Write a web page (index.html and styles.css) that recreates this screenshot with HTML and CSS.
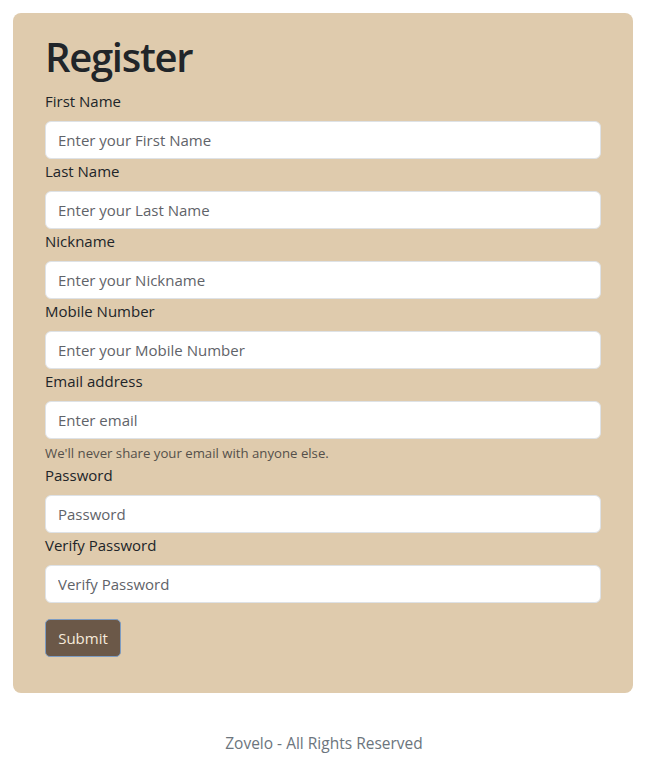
FILE: index.html
```html
<!DOCTYPE html>
<html lang="en">
<head>
<meta charset="utf-8">
<title>Register</title>
<link rel="stylesheet" href="styles.css">
</head>
<body>
<main class="card">
  <h1 class="title">Register</h1>
  <form class="form">
    <label class="label" for="fn">First Name</label>
    <input class="input" id="fn" type="text" placeholder="Enter your First Name">
    <label class="label" for="ln">Last Name</label>
    <input class="input" id="ln" type="text" placeholder="Enter your Last Name">
    <label class="label" for="nn">Nickname</label>
    <input class="input" id="nn" type="text" placeholder="Enter your Nickname">
    <label class="label" for="mn">Mobile Number</label>
    <input class="input" id="mn" type="text" placeholder="Enter your Mobile Number">
    <label class="label" for="em">Email address</label>
    <input class="input" id="em" type="email" placeholder="Enter email">
    <div class="help">We'll never share your email with anyone else.</div>
    <label class="label" for="pw">Password</label>
    <input class="input" id="pw" type="password" placeholder="Password">
    <label class="label" for="vp">Verify Password</label>
    <input class="input" id="vp" type="password" placeholder="Verify Password">
    <button class="btn" type="button">Submit</button>
  </form>
</main>
<footer class="footer">Zovelo - All Rights Reserved</footer>
</body>
</html>
```
FILE: styles.css
```css
* { box-sizing: border-box; }
body {
  margin: 0;
  font-family: "Open Sans", "Noto Sans", sans-serif;
  font-size: 16px;
  line-height: 1.5;
  color: #212529;
  background: #fff;
}
.card {
  margin: 13px 15px 0 13px;
  padding: 20px 32px 36px 32px;
  background: #dfcbad;
  border-radius: 8px;
}
.title {
  margin: 0 0 8px 0;
  font-size: 40px;
  line-height: 48px;
  font-weight: 600;
  letter-spacing: -1.3px;
}
.form {
  display: flex;
  flex-direction: column;
  align-items: stretch;
}
.label {
  display: block;
  line-height: 24px;
  margin-bottom: 8px;
  font-size: 15px;
}
.input {
  display: block;
  width: 100%;
  height: 38px;
  padding: 6px 12px;
  font-family: inherit;
  font-size: 15px;
  color: #212529;
  background: #fff;
  border: 1px solid #dee2e6;
  border-radius: 6px;
}
.input::placeholder { color: #5f6369; }
.help {
  margin-top: 4px;
  font-size: 13.2px;
  line-height: 20px;
  color: #55504a;
}
.btn {
  align-self: flex-start;
  margin-top: 16px;
  height: 38px;
  width: 76px;
  padding: 0;
  font-family: inherit;
  font-size: 15px;
  color: #f6eadb;
  background: #6b5848;
  border: 1px solid #7d9cc2;
  border-radius: 5px;
}
.footer {
  margin-top: 38px;
  text-align: center;
  line-height: 24px;
  font-size: 15.5px;
  color: #6c757d;
}
```
